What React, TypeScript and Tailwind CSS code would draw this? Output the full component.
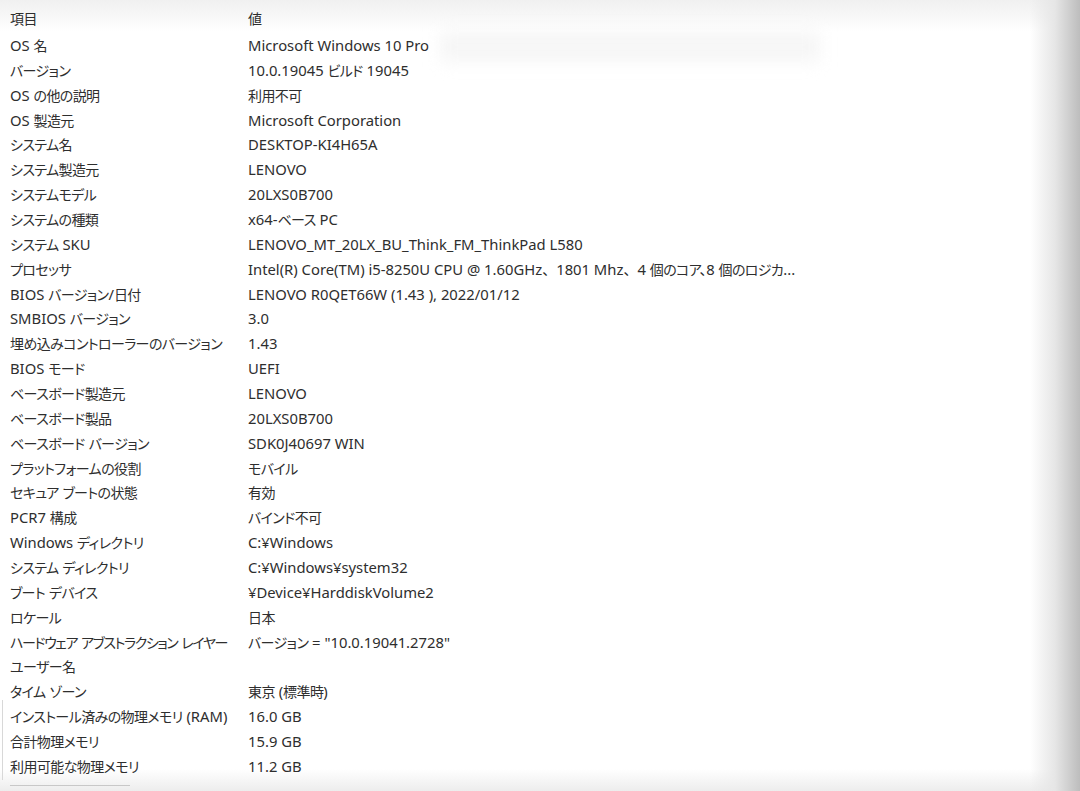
const rows: [string, string][] = [
  ['OS 名', 'Microsoft Windows 10 Pro'],
  ['バージョン', '10.0.19045 ビルド 19045'],
  ['OS の他の説明', '利用不可'],
  ['OS 製造元', 'Microsoft Corporation'],
  ['システム名', 'DESKTOP-KI4H65A'],
  ['システム製造元', 'LENOVO'],
  ['システムモデル', '20LXS0B700'],
  ['システムの種類', 'x64-ベース PC'],
  ['システム SKU', 'LENOVO_MT_20LX_BU_Think_FM_ThinkPad L580'],
  ['プロセッサ', 'Intel(R) Core(TM) i5-8250U CPU @ 1.60GHz、1801 Mhz、4 個のコア、8 個のロジカ...'],
  ['BIOS バージョン/日付', 'LENOVO R0QET66W (1.43 ), 2022/01/12'],
  ['SMBIOS バージョン', '3.0'],
  ['埋め込みコントローラーのバージョン', '1.43'],
  ['BIOS モード', 'UEFI'],
  ['ベースボード製造元', 'LENOVO'],
  ['ベースボード製品', '20LXS0B700'],
  ['ベースボード バージョン', 'SDK0J40697 WIN'],
  ['プラットフォームの役割', 'モバイル'],
  ['セキュア ブートの状態', '有効'],
  ['PCR7 構成', 'バインド不可'],
  ['Windows ディレクトリ', 'C:¥Windows'],
  ['システム ディレクトリ', 'C:¥Windows¥system32'],
  ['ブート デバイス', '¥Device¥HarddiskVolume2'],
  ['ロケール', '日本'],
  ['ハードウェア アブストラクション レイヤー', 'バージョン = "10.0.19041.2728"'],
  ['ユーザー名', ''],
  ['タイム ゾーン', '東京 (標準時)'],
  ['インストール済みの物理メモリ (RAM)', '16.0 GB'],
  ['合計物理メモリ', '15.9 GB'],
  ['利用可能な物理メモリ', '11.2 GB'],
];

// Japanese runs are set a bit tighter, latin a bit larger (Segoe UI-ish widths)
const cjk = /(、|[\u3000-\u30ff\u4e00-\u9fff\uff00-\uffef]+)/;

function Mixed({ text, tight }: { text: string; tight?: boolean }) {
  return (
    <>
      {text.split(cjk).map((part, i) => {
        if (part === '、') {
          return (
            <span key={i} className="text-[14px] [font-feature-settings:normal]">
              {part}
            </span>
          );
        }
        if (cjk.test(part)) {
          return (
            <span key={i} className={`text-[14px] ${tight ? 'tracking-[-1.4px]' : 'tracking-[-0.6px]'}`}>
              {part}
            </span>
          );
        }
        return <span key={i}>{part}</span>;
      })}
    </>
  );
}

function Row({ label, value, header }: { label: string; value: string; header?: boolean }) {
  return (
    <div className={`flex items-center ${header ? 'h-[29.6px]' : 'h-[24.86px]'}`}>
      <div className="w-[248px] shrink-0 pl-[10px] whitespace-nowrap">
        <Mixed text={label} tight={label.startsWith('ハードウェア')} />
      </div>
      <div className="whitespace-nowrap">
        <Mixed text={value} />
      </div>
    </div>
  );
}

export default function App() {
  return (
    <div className="relative w-[1080px] h-[791px] overflow-hidden bg-white">
      {/* haze behind the text */}
      <div className="pointer-events-none absolute inset-x-0 top-0 h-[32px] bg-gradient-to-b from-[#f0f0f0] to-transparent" />
      <div className="pointer-events-none absolute left-[440px] top-[32px] w-[380px] h-[30px] bg-[#f6f6f6] blur-[8px]" />
      <div className="pointer-events-none absolute inset-x-0 bottom-0 h-[22px] bg-gradient-to-t from-[#ededed] to-transparent" />

      <div className="relative pt-[3px] text-[14.8px] text-[#2e2e2e] font-['Noto_Sans','Noto_Sans_CJK_JP',sans-serif] [font-feature-settings:'palt']">
        <Row label="項目" value="値" header />
        {rows.map(([l, v]) => (
          <Row key={l} label={l} value={v} />
        ))}
      </div>

      {/* right shadow */}
      <div className="pointer-events-none absolute right-0 top-0 h-full w-[50px] bg-gradient-to-r from-transparent via-[#e6e6e6] to-[#bdbdbd]" />
      <div className="pointer-events-none absolute left-[10px] bottom-[5px] w-[120px] h-px bg-[#c8c8c8]" />
      <div className="pointer-events-none absolute left-[2px] top-[700px] w-px h-[80px] bg-[#d8d8d8]" />
    </div>
  );
}
